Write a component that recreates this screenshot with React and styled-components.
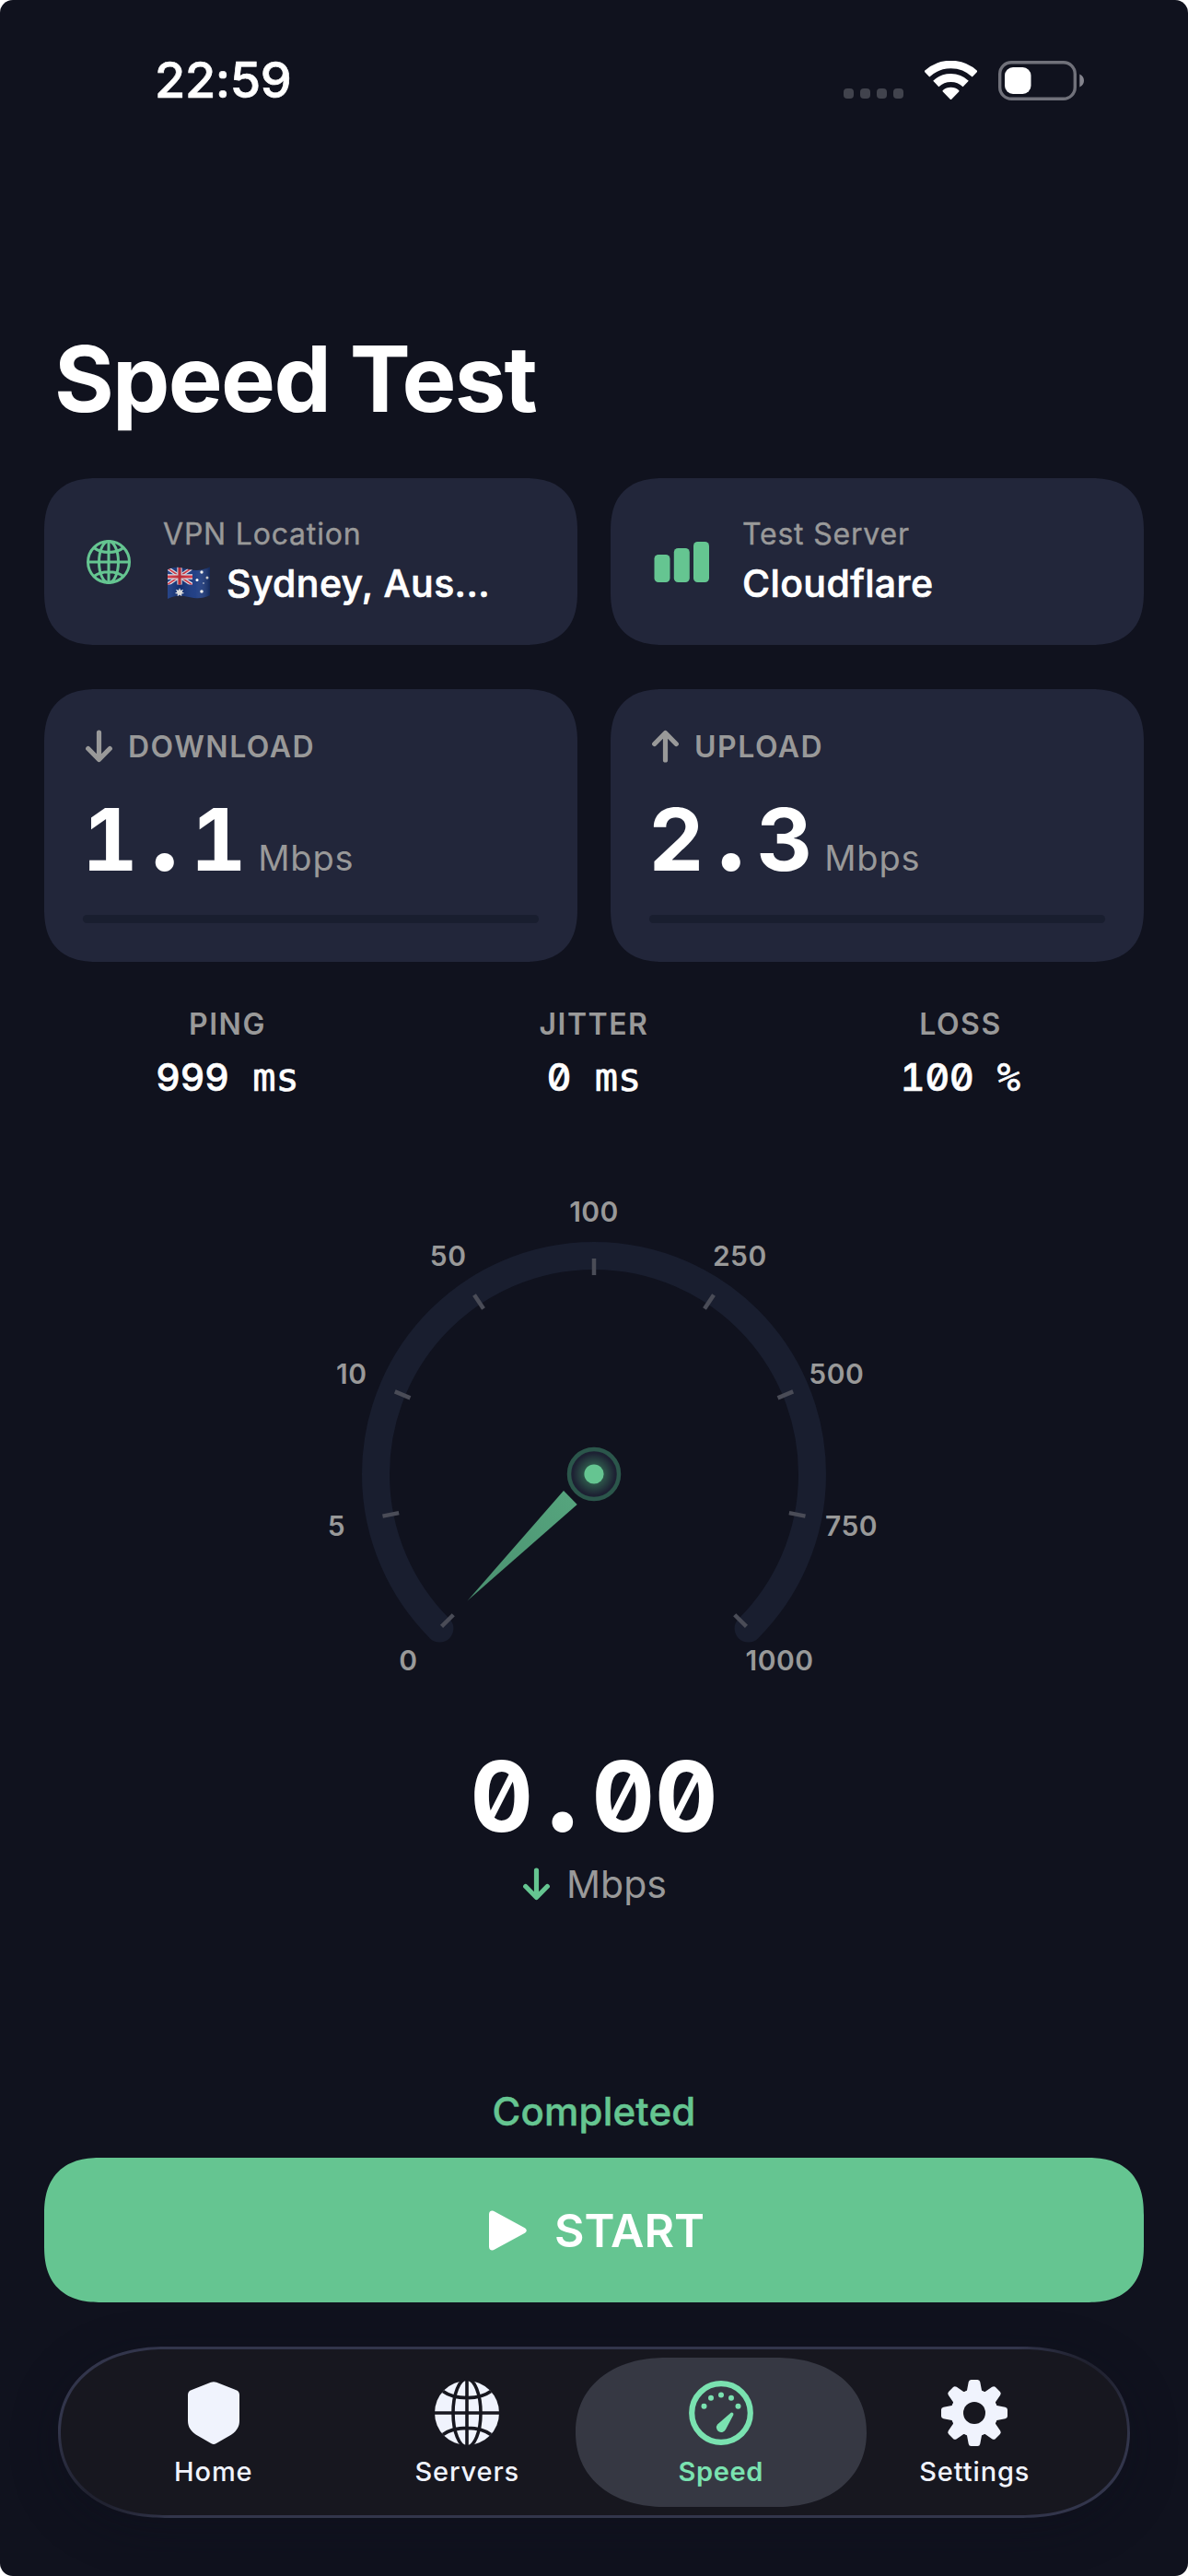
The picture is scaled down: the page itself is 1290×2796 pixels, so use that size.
import React from "react";
import styled, { createGlobalStyle, css } from "styled-components";

const colors = {
  bg: "#10121e",
  card: "#22263a",
  track: "#191e2f",
  muted: "#999999",
  green: "#65c591",
  mint: "#7ae2b0",
  tab: "#f0f3fd",
  bar: "#17171f",
  pill: "#363843",
};

const GlobalStyle = createGlobalStyle`
  * {
    box-sizing: border-box;
  }
  body {
    margin: 0;
    background: #ffffff;
    font-family: Inter, "Liberation Sans", sans-serif;
  }
`;

// continuous corners where the browser knows them, plain radius otherwise
const smooth = (plain, wide, k = 1.3) => css`
  border-radius: ${plain};
  @supports (corner-shape: squircle) {
    border-radius: ${wide};
    corner-shape: superellipse(${k});
  }
`;

const Screen = styled.div`
  display: flex;
  flex-direction: column;
  width: 1290px;
  height: 2796px;
  padding: 0 48px;
  background: ${colors.bg};
  border-radius: 14px;
  color: #ffffff;
  overflow: hidden;
`;

const StatusBar = styled.div`
  display: flex;
  align-items: center;
  justify-content: space-between;
  height: 174px;
  padding: 0 64px 0 120px;
`;

const Time = styled.div`
  font-size: 54px;
  font-weight: 500;
  letter-spacing: -0.4px;
  line-height: 60px;
  -webkit-text-stroke: 0.7px #ffffff;
`;

const StatusIcons = styled.div`
  display: flex;
  align-items: center;
  gap: 23px;
`;

const Dots = styled.div`
  display: flex;
  gap: 7px;
  margin-top: 29px;
  i {
    width: 11px;
    height: 11px;
    border-radius: 4px;
    background: #41434d;
  }
`;

const Title = styled.h1`
  height: 345px;
  margin: 0;
  padding: 177px 0 0 11px;
  font-size: 99px;
  font-weight: 700;
  line-height: 120px;
  letter-spacing: -1.7px;
`;

const CardRow = styled.div`
  display: grid;
  grid-template-columns: 1fr 1fr;
  gap: 36px;
  margin-bottom: ${(p) => p.$bottom || 0}px;
`;

const cardBase = css`
  background: ${colors.card};
  ${smooth("45px", "58px")}
`;

const InfoCard = styled.div`
  ${cardBase}
  display: flex;
  align-items: center;
  height: 181px;
  padding-left: 42px;
`;

const InfoIcon = styled.div`
  display: flex;
  justify-content: center;
  width: ${(p) => p.$width}px;
  margin-right: 31px;
`;

const InfoLabel = styled.div`
  margin-bottom: 8px;
  color: ${colors.muted};
  font-size: 32px;
  font-weight: 400;
  line-height: 40px;
  letter-spacing: 0.8px;
  -webkit-text-stroke: 0.4px ${colors.muted};
`;

const InfoValue = styled.div`
  display: flex;
  align-items: center;
  margin-bottom: 2px;
  font-size: 41px;
  font-weight: 500;
  line-height: 50px;
  letter-spacing: 0.4px;
  -webkit-text-stroke: 0.7px #ffffff;
  svg {
    margin: 0 17px 0 4px;
  }
`;

const SpeedCard = styled.div`
  ${cardBase}
  height: 296px;
  padding: 41px 42px 0;
`;

const SpeedHead = styled.div`
  display: flex;
  align-items: center;
  gap: 17px;
  height: 42px;
  color: ${colors.muted};
  font-size: 32px;
  font-weight: 600;
  letter-spacing: 1.5px;
  svg {
    margin-left: 3px;
  }
`;

const SpeedValue = styled.div`
  display: flex;
  align-items: baseline;
  height: 120px;
  margin-top: 20px;
`;

const slashed = css`
  font-family: Inter, sans-serif;
  font-feature-settings: "tnum", "zero";
`;

const SpeedNumber = styled.span`
  ${slashed}
  margin-left: -1px;
  font-size: 94px;
  font-weight: 700;
  line-height: 120px;
  letter-spacing: 0.7px;
`;

// the decimal point takes a full digit cell
const Point = styled.span`
  display: inline-block;
  width: 0.475em;
  font-size: 1.26em;
  line-height: 0;
  letter-spacing: 0;
  text-align: center;
`;

const SpeedUnit = styled.span`
  margin-left: 12px;
  color: ${colors.muted};
  font-size: 38px;
  letter-spacing: 0.8px;
`;

const Track = styled.div`
  height: 9px;
  margin-top: 22px;
  border-radius: 5px;
  background: ${colors.track};
`;

const Stats = styled.div`
  display: grid;
  grid-template-columns: repeat(3, 1fr);
  padding-top: 48px;
  text-align: center;
`;

const StatLabel = styled.div`
  color: ${colors.muted};
  font-size: 32px;
  font-weight: 600;
  line-height: 40px;
  letter-spacing: 1.5px;
`;

const StatValue = styled.div`
  margin-top: 12px;
  height: 50px;
  font-family: "DejaVu Sans Mono", monospace;
  font-size: 42px;
  line-height: 50px;
  white-space: pre;
  -webkit-text-stroke: 0.7px #ffffff;
  span {
    ${slashed}
    font-size: 41px;
    font-weight: 500;
  }
`;

const GaugeBox = styled.div`
  display: flex;
  justify-content: center;
  height: 580px;
  margin-top: 76px;
  text {
    fill: ${colors.muted};
    font-size: 30px;
    font-weight: 600;
    letter-spacing: 0.5px;
    text-anchor: middle;
  }
`;

const Readout = styled.div`
  ${slashed}
  margin-top: 40px;
  font-size: 106px;
  font-weight: 700;
  line-height: 120px;
  text-align: center;
`;

const ReadoutUnit = styled.div`
  display: flex;
  align-items: center;
  justify-content: center;
  gap: 18px;
  height: 60px;
  margin-top: 5px;
  padding-left: 2px;
  color: ${colors.muted};
  font-size: 41px;
`;

const Status = styled.div`
  margin-top: 192px;
  color: ${colors.green};
  font-size: 42px;
  font-weight: 500;
  line-height: 50px;
  letter-spacing: 0.2px;
  text-align: center;
  -webkit-text-stroke: 0.5px ${colors.green};
`;

const StartButton = styled.button`
  display: flex;
  align-items: center;
  justify-content: center;
  gap: 30px;
  flex: none;
  height: 157px;
  margin-top: 25px;
  padding: 0 0 0 6px;
  border: 0;
  ${smooth("48px", "62px")}
  background: ${colors.green};
  color: #ffffff;
  font: 600 50px/60px Inter, sans-serif;
`;

const TabBar = styled.nav`
  display: grid;
  grid-template-columns: repeat(4, 1fr);
  flex: none;
  height: 186px;
  margin: 48px 15px 0;
  padding: 0 28px;
  border: 3px solid transparent;
  ${smooth("93px", "116px / 93px", 1.12)}
  background:
    linear-gradient(${colors.bar}, ${colors.bar}) padding-box,
    radial-gradient(circle at 50px 150px, #1b1c28 0, transparent 80px) border-box,
    radial-gradient(circle at 1114px 36px, #1b1c28 0, transparent 80px) border-box,
    linear-gradient(#32354b, #32354b) border-box;
  box-shadow: 0 12px 50px rgba(12, 16, 28, 0.4);
`;

const Tab = styled.div`
  position: relative;
  display: flex;
  flex-direction: column;
  align-items: center;
  padding-top: 33px;
  color: ${(p) => (p.$active ? colors.mint : colors.tab)};
  font-size: 29px;
  font-weight: ${(p) => (p.$active ? 600 : 500)};
  line-height: 36px;
  letter-spacing: ${(p) => (p.$active ? 0.6 : 0.9)}px;
  svg,
  span {
    position: relative;
  }
  svg {
    margin-bottom: 10px;
  }
  ${(p) =>
    p.$active &&
    css`
      &::before {
        content: "";
        position: absolute;
        inset: 9px -20px;
        ${smooth("81px", "98px / 81px", 1.12)}
        background: ${colors.pill};
      }
    `}
`;

const WifiIcon = () => (
  <svg width="57" height="43" viewBox="0 0 57 43" fill="none" stroke="#fff">
    <path d="M2.300 14.500A38 38 0 0 1 54.700 14.500" strokeWidth="8.600" />
    <path d="M12.300 25A23.500 23.500 0 0 1 44.700 25" strokeWidth="9" />
    <path d="M28.500 41L20.500 32.800A12 12 0 0 1 36.500 32.800Z" fill="#fff" strokeWidth="2" strokeLinejoin="round" />
  </svg>
);

const BatteryIcon = () => (
  <svg width="94" height="43" viewBox="0 0 94 43">
    <rect x="1.700" y="1.700" width="81.600" height="39.600" rx="12.500" fill="none" stroke="#70717a" strokeWidth="3.400" />
    <rect x="7" y="7" width="28.500" height="29" rx="9" fill="#fff" />
    <path d="M88.300 14.500c3 1.200 4.700 4 4.700 7s-1.700 5.800-4.700 7Z" fill="#85858e" />
  </svg>
);

const GlobeLine = () => (
  <svg width="48" height="48" viewBox="0 0 48 48" fill="none" stroke={colors.green} strokeWidth="3">
    <circle cx="24" cy="24" r="22.500" />
    <ellipse cx="24" cy="24" rx="10.500" ry="22.500" />
    <path d="M24 1.500v45M1.500 24h45M8 8.500c8 6.500 24 6.500 32 0M8 39.500c8-6.500 24-6.500 32 0" />
  </svg>
);

const ServerBars = () => (
  <svg width="60" height="46" viewBox="0 0 60 46" fill={colors.green}>
    <rect x="0.500" y="15" width="17" height="30" rx="4.500" />
    <rect x="21.800" y="8" width="17" height="37" rx="4.500" />
    <rect x="43" y="1" width="17" height="44" rx="4.500" />
  </svg>
);

const Flag = () => (
  <svg width="48" height="36" viewBox="0 0 48 36">
    <defs>
      <linearGradient id="wave" x1="0" x2="1">
        <stop offset="0" stopColor="#fff" stopOpacity="0.080" />
        <stop offset="0.300" stopColor="#000" stopOpacity="0.150" />
        <stop offset="0.650" stopColor="#fff" stopOpacity="0.060" />
        <stop offset="1" stopColor="#000" stopOpacity="0.350" />
      </linearGradient>
      <clipPath id="cloth">
        <path d="M1 3.500C9-1 15 1 24 3s15 1 23-2.500V31c-8 4-14 4-23 2S9 31 1 35Z" />
      </clipPath>
      <clipPath id="canton">
        <rect width="28" height="19.500" />
      </clipPath>
    </defs>
    <g clipPath="url(#cloth)">
      <rect width="48" height="36" fill="#15357f" />
      <g clipPath="url(#canton)">
        <path d="M0 1l28 19M28 1L0 20" stroke="#e6e9f2" strokeWidth="4" />
        <path d="M0 1l28 19M28 1L0 20" stroke="#d6333f" strokeWidth="1.600" />
        <path d="M14 0v20M0 11h28" stroke="#e6e9f2" strokeWidth="5.400" />
        <path d="M14 0v20M0 11h28" stroke="#d6333f" strokeWidth="3.200" />
      </g>
      <path d="M14 23l1.200 2.800 2.900-1-1.500 2.700 2.600 1.600-3 .5.200 3-2.400-2-2.300 2 .1-3-3-.5 2.600-1.600-1.500-2.700 3 1Z" fill="#fff" />
      <g fill="#fff">
        <circle cx="38" cy="6" r="1.700" />
        <circle cx="33" cy="14.500" r="1.500" />
        <circle cx="44" cy="12" r="1.500" />
        <circle cx="40" cy="18" r="0.800" />
        <circle cx="38" cy="27" r="1.800" />
      </g>
      <rect width="48" height="36" fill="url(#wave)" />
    </g>
  </svg>
);

const Arrow = ({ up, color = colors.muted }) => (
  <svg width="29" height="36" viewBox="0 0 29 36" fill="none" stroke={color} strokeWidth="5.200" strokeLinecap="round" strokeLinejoin="round">
    {up ? <path d="M14.500 33V4M2.700 15.500L14.500 3.500l11.800 12" /> : <path d="M14.500 3v29M2.700 20.500l11.800 12 11.800-12" />}
  </svg>
);

const PlayIcon = () => (
  <svg width="41" height="44" viewBox="0 0 41 44">
    <path d="M0 4.500C0 .8 3 -.5 6.200 1.400L38 18.800c3.700 2 3.700 4.400 0 6.400L6.200 42.600C3 44.500 0 43.200 0 39.500Z" fill="#fff" />
  </svg>
);

const ShieldIcon = () => (
  <svg width="72" height="72" viewBox="0 0 72 72">
    <path d="M33 2.800q3-1.300 6 0l21.500 8.400Q64 12.600 64 16.500v28c0 7-3.500 11.500-9 15.200L38.500 69.300q-2.500 1.500-5 0L17 59.700C11.500 56 8 51.500 8 44.500v-28q0-3.900 3.500-5.300Z" fill="currentColor" />
  </svg>
);

const GlobeSolid = () => (
  <svg width="72" height="72" viewBox="0 0 72 72">
    <circle cx="36" cy="36" r="35" fill="currentColor" />
    <g fill="none" stroke={colors.bar} strokeWidth="3.600">
      <path d="M36 0v72M0 36h72M10 12.500c13 9.500 39 9.500 52 0M10 59.500c13-9.500 39-9.500 52 0" />
      <ellipse cx="36" cy="36" rx="15" ry="37" />
    </g>
  </svg>
);

const SpeedIcon = () => (
  <svg width="72" height="72" viewBox="-36 -36 72 72">
    <circle r="31.800" fill="none" stroke="currentColor" strokeWidth="6.200" />
    <g fill="currentColor">
      <circle cx="-18.500" cy="-7.300" r="3" />
      <circle cx="-11" cy="-16.300" r="3" />
      <circle cx="0" cy="-19.500" r="3" />
      <circle cx="11" cy="-16.300" r="3" />
      <circle cx="18.500" cy="-7.300" r="3" />
      <path d="M10.700-.2q1.400-.8 2.600.8.200 1 0 1.700L5.100 17.800A5.300 5.300 0 1 1-4 12.500Z" />
    </g>
  </svg>
);

const GearIcon = () => (
  <svg width="72" height="72" viewBox="-36 -36 72 72">
    <circle r="25.500" fill="currentColor" />
    {[0, 45, 90, 135, 180, 225, 270, 315].map((a) => (
      <path
        key={a}
        d="M-8-24.500L-6.300-33.500Q-5.800-36-3.500-36h7Q5.800-36 6.300-33.500L8-24.500 11-22h-22Z"
        transform={`rotate(${a})`}
        fill="currentColor"
      />
    ))}
    <circle r="12" fill={colors.bar} />
  </svg>
);

const marks = [0, 5, 10, 50, 100, 250, 500, 750, 1000];

const Gauge = () => (
  <svg width="720" height="580" viewBox="-360 -330 720 580">
    <defs>
      <radialGradient id="hub">
        <stop offset="0.350" stopColor="#2f5a4c" />
        <stop offset="0.850" stopColor="#1d2133" />
      </radialGradient>
      <linearGradient id="needle" gradientUnits="userSpaceOnUse" x1="-26" y1="26" x2="-138" y2="138">
        <stop offset="0" stopColor="#55a47d" />
        <stop offset="1" stopColor="#4a9070" />
      </linearGradient>
    </defs>
    <path d="M-167.600 167.600A237 237 0 1 1 167.600 167.600" fill="none" stroke={colors.track} strokeWidth="30" strokeLinecap="round" />
    {marks.map((m, i) => {
      const deg = -135 + i * 33.75;
      const rad = (deg * Math.PI) / 180;
      return (
        <g key={m}>
          <path d="M0-234V-216" stroke="#4a4c57" strokeWidth="4.500" transform={`rotate(${deg})`} />
          <text x={285 * Math.sin(rad)} y={-285 * Math.cos(rad) + 11}>
            {m}
          </text>
        </g>
      );
    })}
    <path d="M-33 18L-18.300 33-137.500 137.500Z" fill="url(#needle)" />
    <circle r="27" fill="url(#hub)" stroke="#2b564b" strokeWidth="4.500" />
    <circle r="10.600" fill={colors.green} />
  </svg>
);

const Digits = ({ value }) => {
  const [whole, rest] = value.split(".");
  return (
    <>
      {whole}
      <Point>.</Point>
      {rest}
    </>
  );
};

const tabs = [
  { label: "Home", Icon: ShieldIcon },
  { label: "Servers", Icon: GlobeSolid },
  { label: "Speed", Icon: SpeedIcon, active: true },
  { label: "Settings", Icon: GearIcon },
];

const speeds = [
  { label: "DOWNLOAD", value: "1.1" },
  { label: "UPLOAD", value: "2.3", up: true },
];

const stats = [
  { label: "PING", value: "999", unit: "ms" },
  { label: "JITTER", value: "0", unit: "ms" },
  { label: "LOSS", value: "100", unit: "%" },
];

const App = () => {
  return (
    <>
      <GlobalStyle />
      <Screen>
        <StatusBar>
          <Time>22:59</Time>
          <StatusIcons>
            <Dots>
              <i />
              <i />
              <i />
              <i />
            </Dots>
            <WifiIcon />
            <BatteryIcon />
          </StatusIcons>
        </StatusBar>

        <Title>Speed Test</Title>

        <CardRow $bottom={48}>
          <InfoCard>
            <InfoIcon $width={56}>
              <GlobeLine />
            </InfoIcon>
            <div>
              <InfoLabel>VPN Location</InfoLabel>
              <InfoValue>
                <Flag />
                Sydney, Aus...
              </InfoValue>
            </div>
          </InfoCard>
          <InfoCard>
            <InfoIcon $width={70}>
              <ServerBars />
            </InfoIcon>
            <div>
              <InfoLabel>Test Server</InfoLabel>
              <InfoValue>Cloudflare</InfoValue>
            </div>
          </InfoCard>
        </CardRow>

        <CardRow>
          {speeds.map((s) => (
            <SpeedCard key={s.label}>
              <SpeedHead>
                <Arrow up={s.up} />
                {s.label}
              </SpeedHead>
              <SpeedValue>
                <SpeedNumber>
                  <Digits value={s.value} />
                </SpeedNumber>
                <SpeedUnit>Mbps</SpeedUnit>
              </SpeedValue>
              <Track />
            </SpeedCard>
          ))}
        </CardRow>

        <Stats>
          {stats.map((s) => (
            <div key={s.label}>
              <StatLabel>{s.label}</StatLabel>
              <StatValue>
                <span>{s.value}</span> {s.unit}
              </StatValue>
            </div>
          ))}
        </Stats>

        <GaugeBox>
          <Gauge />
        </GaugeBox>

        <Readout>
          <Digits value="0.00" />
        </Readout>
        <ReadoutUnit>
          <Arrow color={colors.green} />
          Mbps
        </ReadoutUnit>

        <Status>Completed</Status>
        <StartButton>
          <PlayIcon />
          START
        </StartButton>

        <TabBar>
          {tabs.map(({ label, Icon, active }) => (
            <Tab key={label} $active={active}>
              <Icon />
              <span>{label}</span>
            </Tab>
          ))}
        </TabBar>
      </Screen>
    </>
  );
};

export default App;
